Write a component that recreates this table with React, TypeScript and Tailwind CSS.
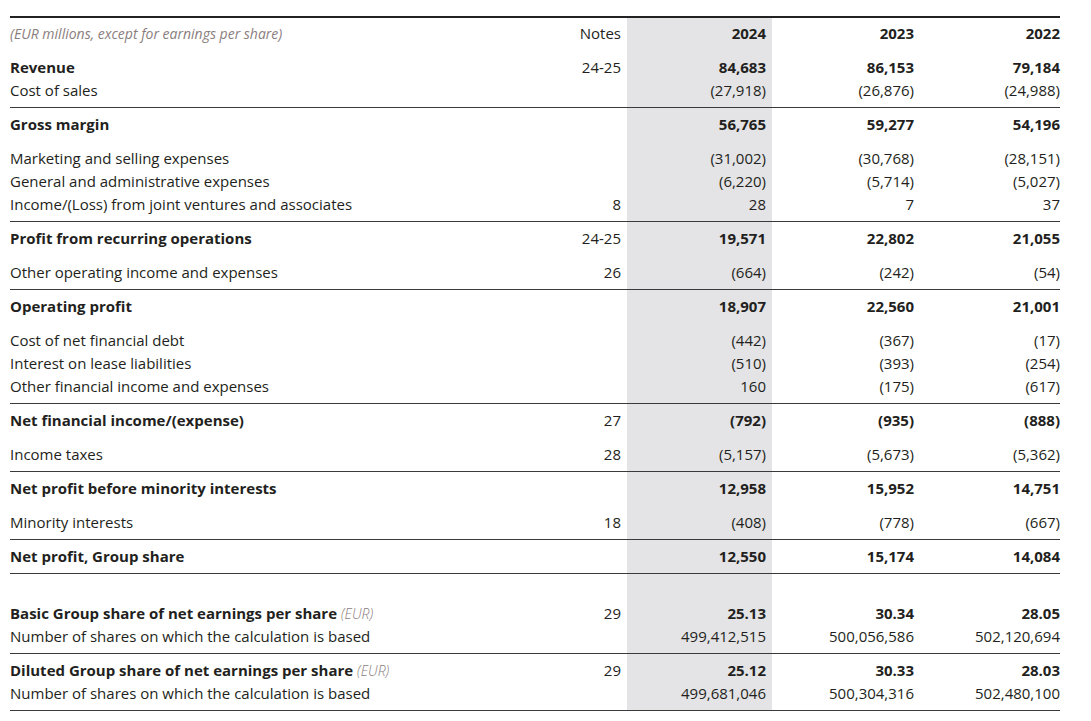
import React from "react";

type Line = {
  label: React.ReactNode;
  bold?: boolean;
  note?: string;
  v: [string, string, string];
};

type Group = {
  lines: Line[];
  border?: boolean;
  pt?: string;
};

const Eur = () => <span className="italic text-[#8a7d7d] text-[14px] font-light">(EUR)</span>;

const groups: Group[] = [
  {
    lines: [
      { label: "Revenue", bold: true, note: "24-25", v: ["84,683", "86,153", "79,184"] },
      { label: "Cost of sales", v: ["(27,918)", "(26,876)", "(24,988)"] },
    ],
    border: true,
  },
  {
    lines: [{ label: "Gross margin", bold: true, v: ["56,765", "59,277", "54,196"] }],
  },
  {
    lines: [
      { label: "Marketing and selling expenses", v: ["(31,002)", "(30,768)", "(28,151)"] },
      { label: "General and administrative expenses", v: ["(6,220)", "(5,714)", "(5,027)"] },
      { label: "Income/(Loss) from joint ventures and associates", note: "8", v: ["28", "7", "37"] },
    ],
    border: true,
  },
  {
    lines: [{ label: "Profit from recurring operations", bold: true, note: "24-25", v: ["19,571", "22,802", "21,055"] }],
  },
  {
    lines: [{ label: "Other operating income and expenses", note: "26", v: ["(664)", "(242)", "(54)"] }],
    border: true,
  },
  {
    lines: [{ label: "Operating profit", bold: true, v: ["18,907", "22,560", "21,001"] }],
  },
  {
    lines: [
      { label: "Cost of net financial debt", v: ["(442)", "(367)", "(17)"] },
      { label: "Interest on lease liabilities", v: ["(510)", "(393)", "(254)"] },
      { label: "Other financial income and expenses", v: ["160", "(175)", "(617)"] },
    ],
    border: true,
  },
  {
    lines: [{ label: "Net financial income/(expense)", bold: true, note: "27", v: ["(792)", "(935)", "(888)"] }],
  },
  {
    lines: [{ label: "Income taxes", note: "28", v: ["(5,157)", "(5,673)", "(5,362)"] }],
    border: true,
  },
  {
    lines: [{ label: "Net profit before minority interests", bold: true, v: ["12,958", "15,952", "14,751"] }],
  },
  {
    lines: [{ label: "Minority interests", note: "18", v: ["(408)", "(778)", "(667)"] }],
    border: true,
  },
  {
    lines: [{ label: "Net profit, Group share", bold: true, v: ["12,550", "15,174", "14,084"] }],
    border: true,
  },
  {
    pt: "pt-[28px]",
    lines: [
      {
        label: (
          <>
            <span className="font-bold">Basic Group share of net earnings per share</span> <Eur />
          </>
        ),
        note: "29",
        v: ["25.13", "30.34", "28.05"],
        bold: true,
      },
      { label: "Number of shares on which the calculation is based", v: ["499,412,515", "500,056,586", "502,120,694"] },
    ],
    border: true,
  },
  {
    lines: [
      {
        label: (
          <>
            <span className="font-bold">Diluted Group share of net earnings per share</span> <Eur />
          </>
        ),
        note: "29",
        v: ["25.12", "30.33", "28.03"],
        bold: true,
      },
      { label: "Number of shares on which the calculation is based", v: ["499,681,046", "500,304,316", "502,480,100"] },
    ],
    border: true,
  },
];

function GroupRow({ g }: { g: Group }) {
  const pt = g.pt ?? "pt-[5px]";
  const pb = g.border ? "pb-[5px]" : "pb-[6px]";
  const pad = `${pt} ${pb}`;
  const col = (i: number) =>
    g.lines.map((l, k) => (
      <div key={k} className={l.bold ? "font-bold" : "font-normal"}>
        {l.v[i]}
      </div>
    ));
  return (
    <div className={`flex ${g.border ? "border-b border-[#3a3a3a]" : ""}`}>
      <div className={`flex-1 ${pad}`}>
        {g.lines.map((l, k) => (
          <div key={k} className={typeof l.label === "string" && l.bold ? "font-bold" : "font-normal"}>
            {l.label}
          </div>
        ))}
      </div>
      <div className={`w-[100px] pr-[6px] text-right ${pad}`}>
        {g.lines.map((l, k) => (
          <div key={k}>{l.note ?? "\u00a0"}</div>
        ))}
      </div>
      <div className={`w-[145px] pr-[6px] text-right bg-[#e4e4e6] ${pad}`}>{col(0)}</div>
      <div className={`w-[143px] pr-[1px] text-right ${pad}`}>{col(1)}</div>
      <div className={`w-[145px] text-right ${pad}`}>{col(2)}</div>
    </div>
  );
}

export default function App() {
  return (
    <div className="w-[1091px] h-[721px] bg-white overflow-hidden">
      <div
        className="ml-[10px] mt-[16px] w-[1050px] border-t-2 border-[#222] text-[15px] leading-[23px] text-[#231f20]"
        style={{ fontFamily: "'Open Sans', 'Noto Sans', sans-serif" }}
      >
        <div className="flex">
          <div className="flex-1 pt-[4px] pb-[6px] italic text-[14px] text-[#8a7d7d]">
            (EUR millions, except for earnings per share)
          </div>
          <div className="w-[100px] pr-[6px] pt-[4px] pb-[6px] text-right">Notes</div>
          <div className="w-[145px] pr-[6px] pt-[4px] pb-[6px] text-right bg-[#e4e4e6] font-bold">2024</div>
          <div className="w-[143px] pr-[1px] pt-[4px] pb-[6px] text-right font-bold">2023</div>
          <div className="w-[145px] pt-[4px] pb-[6px] text-right font-bold">2022</div>
        </div>
        {groups.map((g, i) => (
          <GroupRow key={i} g={g} />
        ))}
      </div>
    </div>
  );
}
